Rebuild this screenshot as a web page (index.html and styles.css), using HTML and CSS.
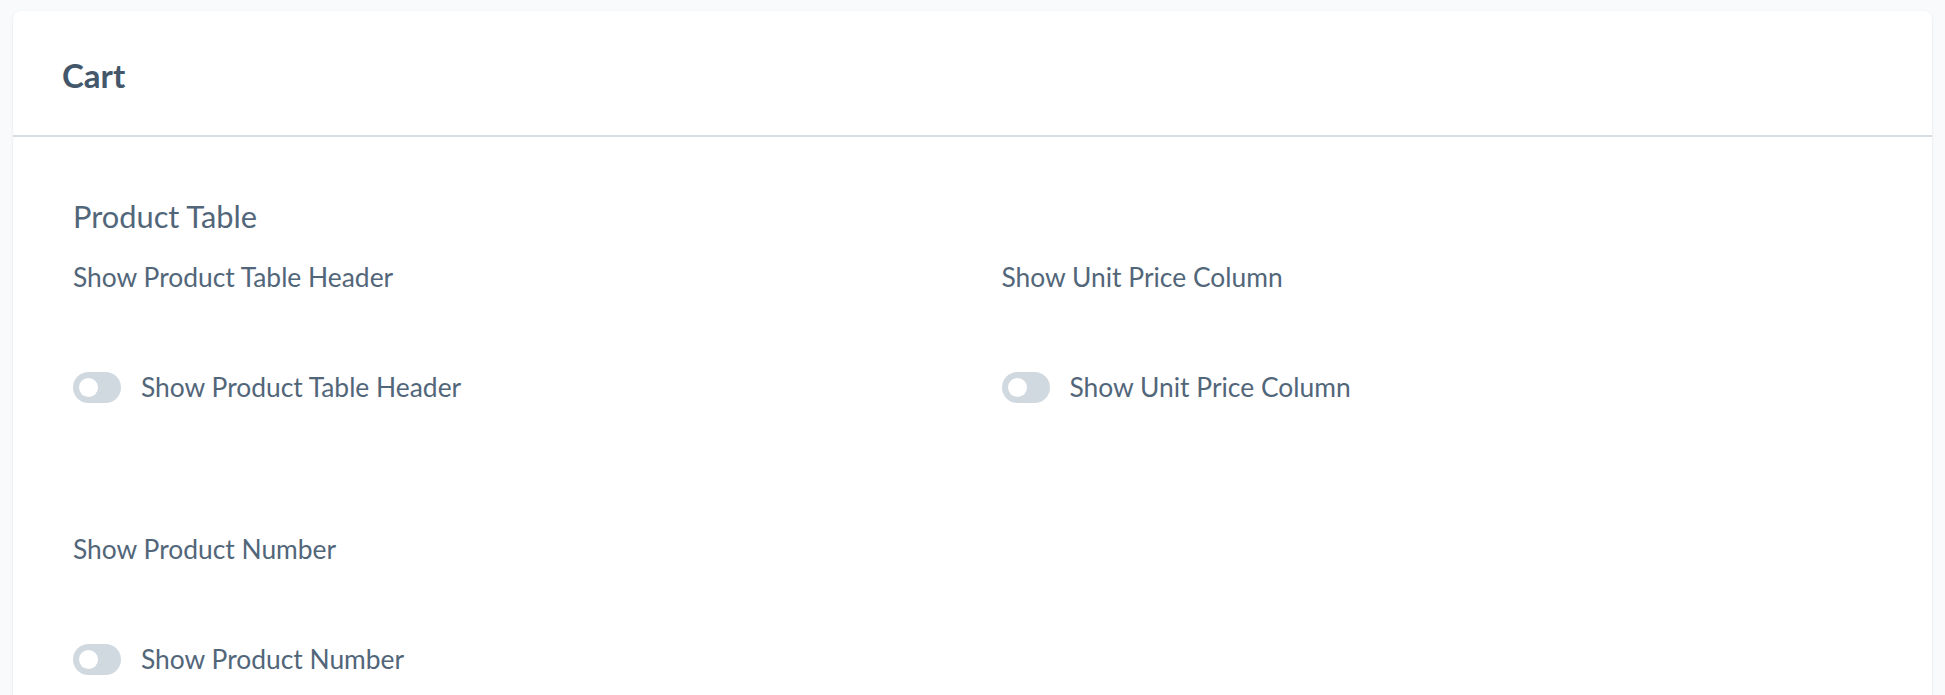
FILE: index.html
```html
<!DOCTYPE html>
<html lang="en">
<head>
<meta charset="utf-8">
<title>Cart</title>
<link rel="stylesheet" href="styles.css">
</head>
<body>
<div class="page">
  <section class="card">
    <header class="card-header">
      <h2 class="card-title">Cart</h2>
    </header>
    <div class="card-body">
      <h3 class="section-title">Product Table</h3>
      <div class="fields">
        <div class="field">
          <div class="field-label">Show Product Table Header</div>
          <label class="switch-row">
            <span class="switch"><span class="knob"></span></span>
            <span class="switch-label">Show Product Table Header</span>
          </label>
        </div>
        <div class="field">
          <div class="field-label">Show Unit Price Column</div>
          <label class="switch-row">
            <span class="switch"><span class="knob"></span></span>
            <span class="switch-label">Show Unit Price Column</span>
          </label>
        </div>
        <div class="field">
          <div class="field-label">Show Product Number</div>
          <label class="switch-row">
            <span class="switch"><span class="knob"></span></span>
            <span class="switch-label">Show Product Number</span>
          </label>
        </div>
      </div>
    </div>
  </section>
</div>
</body>
</html>
```
FILE: styles.css
```css
html, body {
  margin: 0;
  padding: 0;
  background: #f9fafb;
  font-family: "Lato", "Open Sans", sans-serif;
  color: #52667a;
}

.page {
  padding: 11px 13px 0;
}

.card {
  background: #ffffff;
  border-radius: 8px;
  box-shadow: 0 1px 3px rgba(0, 0, 0, 0.1);
  min-height: 700px;
}

.card-header {
  padding: 44px 49px 40px;
  border-bottom: 2px solid #d6dde3;
}

.card-title {
  margin: 0;
  font-size: 33px;
  line-height: 40px;
  font-weight: 700;
  color: #44576a;
}

.card-body {
  padding: 61px 60px 0;
}

.section-title {
  margin: 0 0 25px;
  font-size: 30.8px;
  line-height: 38px;
  font-weight: 400;
  color: #52667a;
}

.fields {
  display: grid;
  grid-template-columns: 1fr 1fr;
  column-gap: 58px;
  row-gap: 130px;
}

.field {
  display: flex;
  flex-direction: column;
  gap: 78px;
}

.field-label,
.switch-label {
  font-size: 26.4px;
  line-height: 32px;
  color: #52667a;
}

.switch-row {
  display: flex;
  align-items: center;
  gap: 20px;
}

.switch {
  position: relative;
  width: 48px;
  height: 31px;
  border-radius: 16px;
  background: #d1d9e0;
  flex: none;
}

.knob {
  position: absolute;
  left: 6px;
  top: 6px;
  width: 19px;
  height: 19px;
  border-radius: 50%;
  background: #ffffff;
}
```
